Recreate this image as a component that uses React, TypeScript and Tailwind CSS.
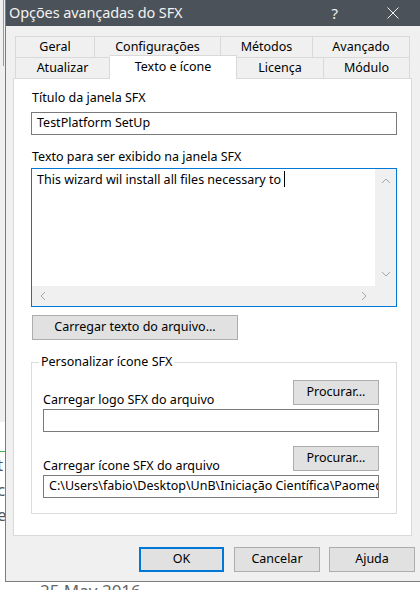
import React from "react";

// small chevron used on the disabled scrollbars
const Chevron = ({ dir }: { dir: "up" | "down" | "left" | "right" }) => {
    const paths: Record<string, string> = {
        up: "M1 5 L5 1 L9 5",
        down: "M1 1 L5 5 L9 1",
        left: "M5 1 L1 5 L5 9",
        right: "M1 1 L5 5 L1 9",
    };
    const vertical = dir === "up" || dir === "down";
    return (
        <svg
            width={vertical ? 10 : 6}
            height={vertical ? 6 : 10}
            viewBox={vertical ? "0 0 10 6" : "0 0 6 10"}
            fill="none"
            stroke="#a6a6a6"
            strokeWidth="1"
        >
            <path d={paths[dir]} />
        </svg>
    );
};

const row1 = [
    { label: "Geral", w: "w-[80px]" },
    { label: "Configurações", w: "w-[126px]" },
    { label: "Métodos", w: "w-[92px]" },
    { label: "Avançado", w: "w-[97px]" },
];

const row2 = [
    { label: "Atualizar", w: "w-[95px]", active: false },
    { label: "Texto e ícone", w: "w-[127px]", active: true },
    { label: "Licença", w: "w-[87px]", active: false },
    { label: "Módulo", w: "w-[86px]", active: false },
];

const WinButton = ({ label, className }: { label: string; className?: string }) => (
    <div
        className={`h-[25px] flex items-center justify-center bg-[#e1e1e1] border border-[#adadad] text-[12.5px] text-black ${className ?? ""}`}
    >
        {label}
    </div>
);

const App = () => {
    return (
        <div
            className="w-[420px] h-[590px] overflow-hidden bg-white flex"
            style={{ fontFamily: '"Noto Sans", "Open Sans", sans-serif' }}
        >
            {/* what shows of the window behind */}
            <div className="w-[5px] shrink-0 flex flex-col overflow-hidden">
                <div className="h-[422px] bg-[#f0f0f0] flex">
                    <div className="ml-[3px] w-px h-[66px] bg-[#9a9a9a]" />
                </div>
                <div className="h-[30px] border-b border-[#4caf50]" />
                <div className="flex flex-col -ml-[3px] text-[17px] leading-[25px] text-[#555]">
                    <span>t</span>
                    <span>c</span>
                    <span>e</span>
                </div>
            </div>

            <div className="flex flex-col shrink-0">
                {/* dialog */}
                <div className="w-[420px] h-[582px] shrink-0 flex flex-col bg-[#f0f0f0] border-l border-b border-[#7d7d7d]">
                    {/* title bar */}
                    <div className="h-[26px] shrink-0 bg-[#4b5259] flex items-center text-[#f2f2f2]">
                        <span className="ml-[3px] text-[14.5px] tracking-[-0.1px]">Opções avançadas do SFX</span>
                        <span className="ml-auto text-[15px] mr-[49px]">?</span>
                        <svg width="12" height="12" viewBox="0 0 12 12" className="mr-[26px]" stroke="#f2f2f2" strokeWidth="1">
                            <path d="M0.5 0.5 L11.5 11.5 M11.5 0.5 L0.5 11.5" />
                        </svg>
                    </div>

                    {/* tabs */}
                    <div className="mt-[10px] ml-[9px] w-[395px] flex flex-col text-[12.5px] text-black">
                        <div className="flex h-[21px]">
                            {row1.map((t, i) => (
                                <div
                                    key={t.label}
                                    className={`${t.w} flex items-center justify-center border-t border-r border-[#d9d9d9] ${i === 0 ? "border-l" : ""}`}
                                >
                                    {t.label}
                                </div>
                            ))}
                        </div>
                        <div className="flex h-[21px] items-end">
                            {row2.map((t, i) =>
                                t.active ? (
                                    <div
                                        key={t.label}
                                        className={`${t.w} h-[24px] -mb-px relative z-10 bg-white border-t border-r border-[#d9d9d9] flex justify-center pt-[2px]`}
                                    >
                                        {t.label}
                                    </div>
                                ) : (
                                    <div
                                        key={t.label}
                                        className={`${t.w} h-[21px] flex items-center justify-center border-t border-r border-[#d9d9d9] ${i === 0 ? "border-l" : ""}`}
                                    >
                                        {t.label}
                                    </div>
                                )
                            )}
                        </div>
                    </div>

                    {/* panel */}
                    <div className="ml-[7px] w-[399px] h-[458px] bg-white border border-[#d9d9d9] flex flex-col pl-[17px] text-[12.5px] text-black">
                        <div className="mt-[11px] ml-px h-[16px] leading-[16px]">Título da janela SFX</div>
                        <div className="mt-[6px] w-[366px] h-[23px] border border-[#7a7a7a] flex items-center pl-[5px]">
                            TestPlatform SetUp
                        </div>

                        <div className="mt-[14px] ml-px h-[16px] leading-[16px]">Texto para ser exibido na janela SFX</div>
                        <div className="mt-[3px] w-[366px] h-[139px] border border-[#0078d7] flex flex-col">
                            <div className="flex h-[117px]">
                                <div className="flex-1 pl-[5px] pt-[2px] flex items-start">
                                    <span>This wizard wil install all files necessary to&nbsp;</span>
                                    <span className="w-px h-[16px] bg-black" />
                                </div>
                                <div className="w-[21px] bg-[#f0f0f0] flex flex-col items-center justify-between py-[9px]">
                                    <Chevron dir="up" />
                                    <Chevron dir="down" />
                                </div>
                            </div>
                            <div className="h-[20px] bg-[#f0f0f0] flex items-center">
                                <div className="w-[343px] flex items-center justify-between pl-[8px] pr-[8px]">
                                    <Chevron dir="left" />
                                    <Chevron dir="right" />
                                </div>
                            </div>
                        </div>

                        <WinButton label="Carregar texto do arquivo..." className="mt-[8px] ml-px w-[206px]" />

                        {/* group box */}
                        <div className="relative mt-[22px] w-[366px] h-[152px] border border-[#dcdcdc] flex flex-col pl-[11px]">
                            <span className="absolute -top-[9px] left-[7px] bg-white px-[2px] leading-[16px]">
                                Personalizar ícone SFX
                            </span>

                            <div className="mt-[17px] w-[336px] flex items-end justify-between">
                                <span className="leading-[16px] mb-[-3px]">Carregar logo SFX do arquivo</span>
                                <WinButton label="Procurar..." className="w-[86px]" />
                            </div>
                            <div className="mt-[4px] w-[336px] h-[23px] border border-[#7a7a7a]" />

                            <div className="mt-[14px] w-[336px] flex items-end justify-between">
                                <span className="leading-[16px] mb-[-3px]">Carregar ícone SFX do arquivo</span>
                                <WinButton label="Procurar..." className="w-[86px]" />
                            </div>
                            <div className="mt-[4px] w-[336px] h-[23px] border border-[#7a7a7a] flex items-center pl-[5px] overflow-hidden whitespace-nowrap">
                                C:\Users\fabio\Desktop\UnB\Iniciação Científica\Paomedia
                            </div>
                        </div>
                    </div>

                    {/* dialog buttons */}
                    <div className="mt-[11px] ml-[133px] flex gap-[10px]">
                        <div className="w-[85px] h-[25px] flex items-center justify-center bg-[#e1e1e1] border-2 border-[#0078d7] text-[12.5px] text-black">
                            OK
                        </div>
                        <WinButton label="Cancelar" className="w-[86px]" />
                        <WinButton label="Ajuda" className="w-[86px] -ml-px" />
                    </div>
                </div>

                {/* page behind */}
                <div className="ml-[35px] -mt-px text-[17px] leading-[20px] text-[#666]">25 May 2016</div>
            </div>
        </div>
    );
};

export default App;
